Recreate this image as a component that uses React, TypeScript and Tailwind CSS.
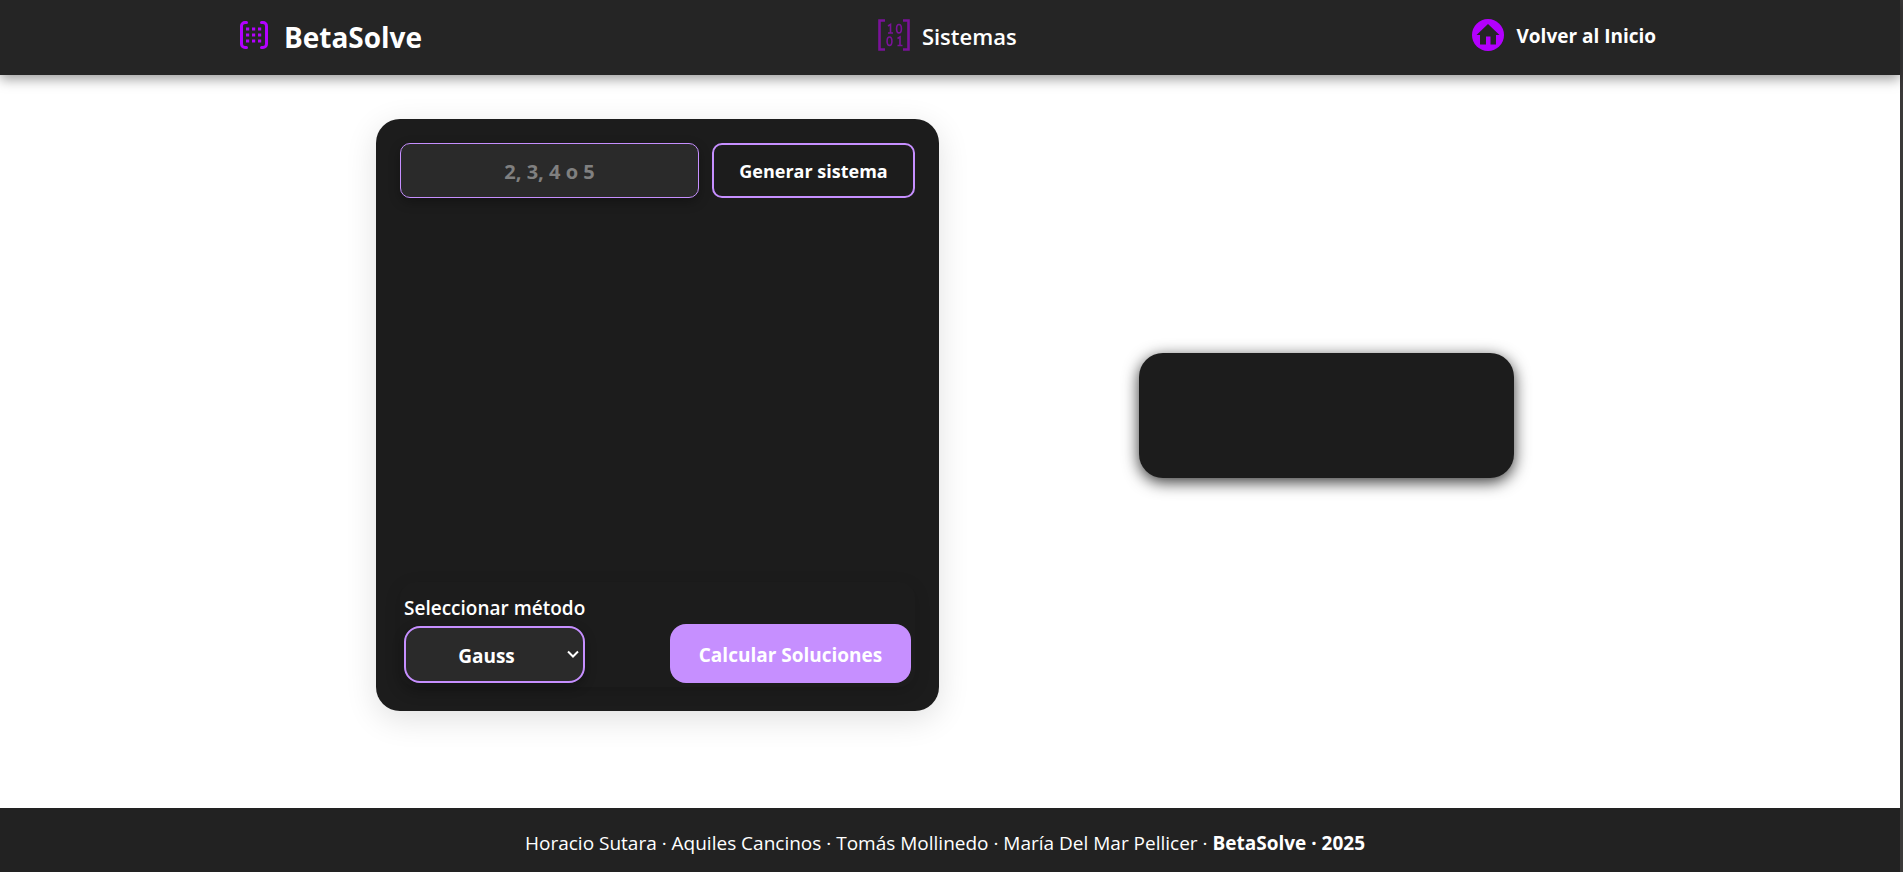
import React from "react";

function MatrixIcon() {
  return (
    <svg className="mb-1 size-7 fill-none stroke-[#b300ff]" viewBox="0 0 28 28" aria-hidden="true">
      <path d="M6.5 1.5H5A3.5 3.5 0 0 0 1.5 5v18A3.5 3.5 0 0 0 5 26.5h1.5M21.5 1.5H23A3.5 3.5 0 0 1 26.5 5v18a3.5 3.5 0 0 1-3.5 3.5h-1.5" strokeWidth="3" strokeLinecap="round" />
      <path d="M6 8h3.2m2.8 0h3.2m2.8 0h3.2M6 14h3.2m2.8 0h3.2m2.8 0h3.2M6 20h3.2m2.8 0h3.2m2.8 0h3.2" strokeWidth="3.2" />
    </svg>
  );
}

function BinaryIcon() {
  return (
    <svg className="mb-1 size-8 fill-none stroke-[#7a1299]" viewBox="0 0 32 32" aria-hidden="true">
      <path d="M7 1.5H1.5v29H7M25 1.5h5.5v29H25" strokeWidth="2.6" />
      <path d="M10 7l2.500-1.500V14M10 14h5M22 26.500V18L19.500 19.500M19.500 26.500h5" strokeWidth="1.600" />
      <ellipse cx="21" cy="9.700" rx="2.400" ry="4.200" strokeWidth="1.600" />
      <ellipse cx="11.500" cy="22.200" rx="2.400" ry="4.200" strokeWidth="1.600" />
    </svg>
  );
}

function HomeIcon() {
  return (
    <svg className="mb-1 size-8" viewBox="0 0 32 32" aria-hidden="true">
      <circle cx="16" cy="16" r="16" fill="#b300ff" />
      <path d="M16 5L4.500 16H8v9.500h6v-8h4.500v8H24V16h3.500z" fill="#252525" />
    </svg>
  );
}

export default function App() {
  return (
    <div className="flex min-h-screen flex-col border-r-3 border-[#3b3a39] bg-white font-['Open_Sans','Noto_Sans',sans-serif] text-white">
      <header className="z-10 flex h-[75px] items-center justify-around bg-[#252525] pr-4 pb-0.5 pl-3 shadow-[0_4px_12px_rgba(0,0,0,0.4)]">
        <a href="#" className="flex items-center gap-4 text-[28px] font-bold">
          <MatrixIcon />
          <span>BetaSolve</span>
        </a>
        <a href="#" className="flex items-center gap-3 text-[22px] font-semibold">
          <BinaryIcon />
          <span>Sistemas</span>
        </a>
        <a href="#" className="flex items-center gap-3 text-[19px] font-bold">
          <HomeIcon />
          <span>Volver al Inicio</span>
        </a>
      </header>

      <main className="flex flex-1 items-start justify-center gap-[200px] pt-11 pr-2.5 pb-24">
        <section className="flex h-[592px] w-[563px] flex-col justify-between rounded-3xl bg-[#1c1c1c] p-6 shadow-[0_8px_32px_rgba(0,0,0,0.12)]">
          <div className="flex gap-[13px]">
            <input
              type="text"
              aria-label="Tamaño del sistema"
              placeholder="2, 3, 4 o 5"
              className="h-[55px] min-w-0 flex-1 rounded-[10px] border border-[#c68fff] bg-[#2a2a2a] pt-0.5 text-center text-[20px] font-bold shadow-[0_4px_12px_rgba(0,0,0,0.3)] placeholder:text-[#808080]"
            />
            <button type="button" className="h-[55px] w-[203px] rounded-[10px] border-2 border-[#c68fff] pt-0.5 text-[18px] font-bold">
              Generar sistema
            </button>
          </div>
          <div className="flex items-end justify-between rounded-2xl px-1 pt-3 pb-1 shadow-[0_4px_16px_rgba(0,0,0,0.15)]">
            <div className="flex w-[181px] flex-col gap-1">
              <label htmlFor="metodo" className="text-[19px] leading-7 font-semibold whitespace-nowrap">Seleccionar método</label>
              <div className="relative">
                <select
                  id="metodo"
                  className="h-[57px] w-full appearance-none rounded-2xl border-2 border-[#c68fff] bg-[#2a2a2a] pt-1 pr-4 text-center text-[19px] font-bold [text-align-last:center] shadow-[0_4px_12px_rgba(0,0,0,0.3)]"
                >
                  <option>Gauss</option>
                </select>
                <svg className="pointer-events-none absolute top-6 right-1.5 h-2 w-3 fill-none stroke-white" viewBox="0 0 12 8" aria-hidden="true">
                  <path d="M1 1.5l5 5 5-5" strokeWidth="2" />
                </svg>
              </div>
            </div>
            <button type="button" className="h-[59px] w-[241px] rounded-2xl bg-[#c68fff] pt-1 text-[19px] font-bold">
              Calcular Soluciones
            </button>
          </div>
        </section>
        <section className="h-[125px] w-[375px] self-center rounded-3xl bg-[#1c1c1c] shadow-[0_4px_16px_rgba(0,0,0,0.8)]" />
      </main>

      <footer className="h-16 bg-[#222222] pt-[21px] pr-2.5 text-center text-[19px] leading-7">
        Horacio Sutara · Aquiles Cancinos · Tomás Mollinedo · María Del Mar Pellicer · <strong>BetaSolve · 2025</strong>
      </footer>
    </div>
  );
}
